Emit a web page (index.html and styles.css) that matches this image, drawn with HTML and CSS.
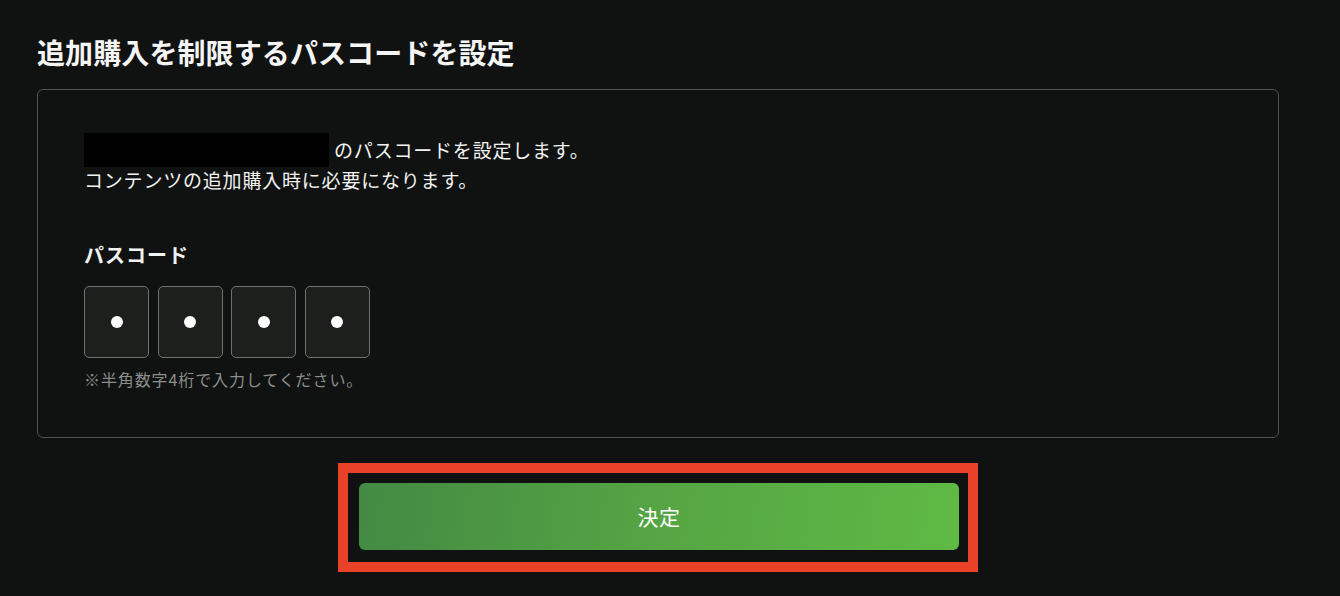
FILE: index.html
```html
<!DOCTYPE html>
<html lang="ja">
<head>
<meta charset="utf-8">
<title>パスコード設定</title>
<link rel="stylesheet" href="styles.css">
</head>
<body>
<main class="page">
  <h1 class="title">追加購入を制限するパスコードを設定</h1>
  <section class="card">
    <p class="desc"><span class="redact"></span> のパスコードを設定します。<br>コンテンツの追加購入時に必要になります。</p>
    <h2 class="label">パスコード</h2>
    <div class="pins">
      <div class="pin"><span class="dot"></span></div>
      <div class="pin"><span class="dot"></span></div>
      <div class="pin"><span class="dot"></span></div>
      <div class="pin"><span class="dot"></span></div>
    </div>
    <p class="hint">※半角数字4桁で入力してください。</p>
  </section>
  <div class="actions">
    <div class="highlight">
      <button class="submit" type="button">決定</button>
    </div>
  </div>
</main>
</body>
</html>
```

FILE: styles.css
```css
* { box-sizing: border-box; }
html, body {
  margin: 0;
  padding: 0;
  background: #101211;
  height: 100%;
}
body {
  font-family: "Noto Sans CJK JP", "Noto Sans", sans-serif;
  color: #f2f2f2;
  overflow: hidden;
}
.page {
  padding: 32px 0 0 37px;
  width: 1279px;
}
.title {
  margin: 0;
  font-size: 28px;
  line-height: 40px;
  font-weight: 700;
  letter-spacing: 0.1px;
  color: #f5f5f5;
}
.card {
  margin-top: 17px;
  border: 1px solid #4f5250;
  border-radius: 6px;
  padding: 45px 46px 45px 46px;
  height: 349px;
}
.desc {
  margin: 0;
  font-size: 19px;
  line-height: 30px;
  letter-spacing: 0.8px;
}
.redact {
  display: inline-block;
  width: 245px;
  height: 34px;
  margin: -2px 0;
  background: #000;
  vertical-align: top;
}
.label {
  margin: 45px 0 0;
  font-size: 20px;
  line-height: 30px;
  font-weight: 700;
  letter-spacing: 1px;
}
.pins {
  display: flex;
  gap: 8.5px;
  margin-top: 16px;
}
.pin {
  width: 65px;
  height: 72px;
  border: 1px solid #6e716e;
  border-radius: 5px;
  background: #1d1f1d;
  display: flex;
  align-items: center;
  justify-content: center;
}
.dot {
  width: 12px;
  height: 12px;
  border-radius: 50%;
  background: #fff;
}
.hint {
  margin: 9px 0 0;
  font-size: 16px;
  line-height: 24px;
  letter-spacing: 0.9px;
  color: #8b8d8b;
}
.actions {
  display: flex;
  justify-content: center;
  margin-top: 25px;
}
.highlight {
  width: 640px;
  border: 10px solid #ea4129;
  padding: 10px 10px 12px 11px;
}
.submit {
  display: block;
  width: 600px;
  height: 67px;
  border: 0;
  border-radius: 6px;
  background: linear-gradient(100deg, #438943 0%, #55a544 50%, #5fba44 100%);
  color: #fff;
  font-family: "Noto Sans CJK JP", "Noto Sans", sans-serif;
  font-size: 21px;
  line-height: 30px;
  letter-spacing: 0.5px;
  padding: 0 0 2px;
  cursor: pointer;
}
```
